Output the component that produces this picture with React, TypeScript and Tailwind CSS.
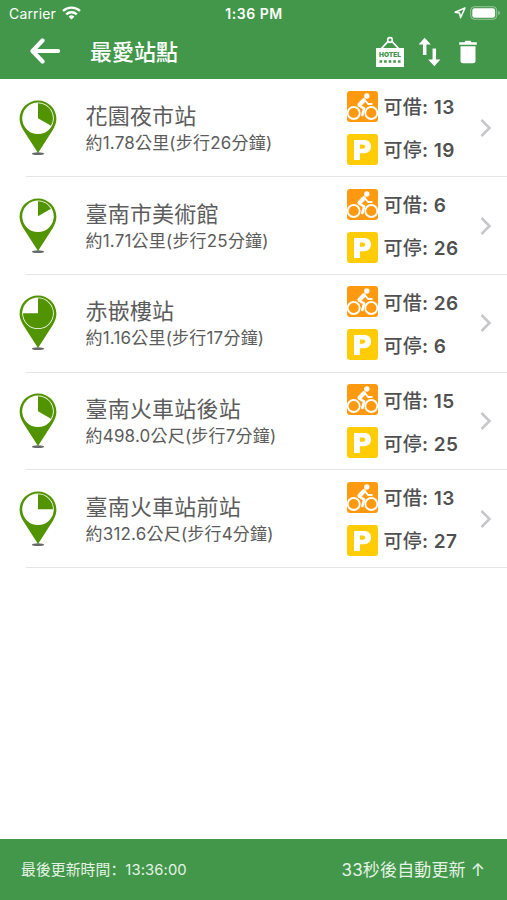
import React from 'react';

interface Station {
  name: string;
  distance: string;
  bikes: number;
  docks: number;
  angle: number;
}

const STATIONS: Station[] = [
  { name: '花園夜市站', distance: '約1.78公里(步行26分鐘)', bikes: 13, docks: 19, angle: 120 },
  { name: '臺南市美術館', distance: '約1.71公里(步行25分鐘)', bikes: 6, docks: 26, angle: 60 },
  { name: '赤嵌樓站', distance: '約1.16公里(步行17分鐘)', bikes: 26, docks: 6, angle: 270 },
  { name: '臺南火車站後站', distance: '約498.0公尺(步行7分鐘)', bikes: 15, docks: 25, angle: 120 },
  { name: '臺南火車站前站', distance: '約312.6公尺(步行4分鐘)', bikes: 13, docks: 27, angle: 90 },
];

const StationPin: React.FC<{ angle: number }> = ({ angle }) => {
  const r = 15;
  const rad = (angle * Math.PI) / 180;
  const x = 19 + r * Math.sin(rad);
  const y = 18.3 - r * Math.cos(rad);

  return (
    <svg width="38" height="56" viewBox="0 0 38 56" className="block shrink-0">
      <ellipse cx="19" cy="53.7" rx="6.2" ry="1.4" fill="#66686a" />
      <path d="M19 .4C8.8.4.6 8.6.6 18.8c0 4 1.5 7.5 3.6 11.1L19 53l14.8-23.1c2.1-3.6 3.6-7.1 3.6-11.1C37.4 8.6 29.2.4 19 .4Z" fill="#529300" />
      <circle cx="19" cy="18.3" r="15.8" fill="#fff" />
      <path d={`M19 18.3V${18.3 - r}A${r} ${r} 0 ${angle > 180 ? 1 : 0} 1 ${x} ${y}Z`} fill="#529300" />
    </svg>
  );
};

const BikeIcon = () => (
  <svg width="31" height="31" viewBox="0 0 31 31" className="block shrink-0">
    <rect width="31" height="31" rx="3" fill="#ff9a10" />
    <g fill="none" stroke="#fff" strokeLinecap="round" strokeLinejoin="round">
      <circle cx="6.7" cy="22" r="6" strokeWidth="1.8" />
      <circle cx="24.3" cy="22" r="6" strokeWidth="1.8" />
      <path d="m16.8 9.3-4.3 4.5" strokeWidth="4.2" />
      <path d="m12.3 14.5 4.9 3.2-1.9 6.3" strokeWidth="2.6" />
      <path d="m17.8 9 3.2 4h3.8" strokeWidth="1.9" />
    </g>
    <circle cx="19.8" cy="5" r="2.7" fill="#fff" />
  </svg>
);

const ParkingIcon = () => (
  <svg width="31" height="31" viewBox="0 0 31 31" className="block shrink-0">
    <rect width="31" height="31" rx="3" fill="#ffcc05" />
    <path fillRule="evenodd" d="M7 6h10c4.7 0 7 2.5 7 6.6s-2.5 6.6-7 6.6h-4.1V26H7Zm5.9 4.5v4.2h3c1.5 0 2.4-.7 2.4-2.1s-.9-2.1-2.4-2.1Z" fill="#fff" />
  </svg>
);

const StatusBar = () => (
  <div className="grid h-7 grid-cols-3 items-center px-2 text-[14px] leading-7">
    <div className="flex items-center gap-1.5 pl-px">
      <span className="tracking-[0.15px]">Carrier</span>
      <svg width="19" height="14" viewBox="0 0 19 14" className="-mt-0.5">
        <g fill="none" stroke="#fff" strokeWidth="2.4">
          <path d="M1 5a12.3 12.3 0 0 1 17 0" />
          <path d="M4.2 8.3a7.8 7.8 0 0 1 10.6 0" />
        </g>
        <path d="M9.5 13.6 6.6 10.7a4.1 4.1 0 0 1 5.8 0Z" fill="#fff" />
      </svg>
    </div>
    <span className="pl-px text-center font-semibold tracking-[0.55px]">1:36 PM</span>
    <div className="flex items-center justify-end gap-1 pb-0.5">
      <svg width="12" height="12" viewBox="0 0 12 12">
        <path d="M11 1 1.1 5.2l4.5.9.9 4.6Z" fill="none" stroke="#fff" strokeWidth="1.5" strokeLinejoin="round" />
      </svg>
      <svg width="31" height="14" viewBox="0 0 31 14" className="-mr-0.5">
        <rect x=".7" y=".7" width="26" height="12.6" rx="3.6" fill="none" stroke="#fff" strokeOpacity=".45" />
        <rect x="2.3" y="2.2" width="22.8" height="9.6" rx="2.2" fill="#fff" />
        <path d="M28.3 4.8c2 .7 2 3.7 0 4.4Z" fill="#fff" fillOpacity=".5" />
      </svg>
    </div>
  </div>
);

const TitleBar = () => (
  <div className="flex h-[51px] items-center pb-[5px] pl-[30px] pr-[30px]">
    <svg width="30" height="26" viewBox="0 0 30 26" className="shrink-0">
      <path d="M12.5 2.5 2.5 13l10 10.5M3 13h25" fill="none" stroke="#fff" strokeWidth="4.2" strokeLinecap="round" strokeLinejoin="round" />
    </svg>
    <h1 className="ml-[30px] pt-0.5 text-[22px] font-medium">最愛站點</h1>
    <div className="ml-auto flex items-center gap-[13px] pt-0.5">
      <svg width="30" height="32" viewBox="0 0 30 32">
        <path d="m6 13 8-8.5h2l8 8.5" fill="none" stroke="#fff" strokeWidth="1.8" />
        <circle cx="15" cy="4" r="2.3" fill="#43974a" stroke="#fff" strokeWidth="1.7" />
        <rect x="1" y="12" width="28" height="19" fill="#fff" />
        <text x="15" y="21.3" textAnchor="middle" textLength="22" lengthAdjust="spacingAndGlyphs" fontSize="6.8" fontWeight="900" fill="#43974a">HOTEL</text>
        <path d="M4.5 25.5h21" stroke="#43974a" strokeWidth="2.5" strokeDasharray="2.6 2" />
      </svg>
      <svg width="23" height="32" viewBox="0 0 23 32">
        <g stroke="#fff" strokeWidth="3.5">
          <path d="M6.7 7v12M16.3 12.5V25" />
        </g>
        <path d="M6.7 1.8 12.8 8.5H.6ZM16.3 30.2l6.1-6.7H10.2Z" fill="#fff" />
      </svg>
      <svg width="18" height="24" viewBox="0 0 18 24" className="ml-[5px]">
        <path d="M.2 2.3h5.3l1-1.5h5l1 1.5h5.3v2.5H.2ZM1.5 6.2h15v14.5a2.5 2.5 0 0 1-2.5 2.5H4a2.5 2.5 0 0 1-2.5-2.5Z" fill="#fff" />
      </svg>
    </div>
  </div>
);

const StationRow: React.FC<{ station: Station }> = ({ station }) => (
  <li className="h-[97.7px] pl-[26px]">
    <div className="flex h-full items-center border-b border-[#e5e5e5]">
      <div className="-ml-[7px] w-[66.5px] shrink-0">
        <StationPin angle={station.angle} />
      </div>
      <div className="w-[261px] shrink-0 whitespace-nowrap pt-1 text-[#5c5c5c]">
        <div className="text-[22px] leading-[27px] tracking-[0.2px]">{station.name}</div>
        <div className="text-[17px] leading-[27px] tracking-[0.2px]">{station.distance}</div>
      </div>
      <div className="flex w-[133px] shrink-0 flex-col gap-3 text-[19px] font-semibold leading-[31px] tracking-[0.45px] text-[#505050]">
        <div className="flex h-[31px] items-center gap-1.5">
          <BikeIcon />
          <span className="whitespace-nowrap pt-[3px]"><span className="font-medium tracking-[0.25px]">可借</span>: {station.bikes}</span>
        </div>
        <div className="flex h-[31px] items-center gap-1.5">
          <ParkingIcon />
          <span className="whitespace-nowrap pt-[3px]"><span className="font-medium tracking-[0.25px]">可停</span>: {station.docks}</span>
        </div>
      </div>
      <svg width="12" height="20" viewBox="0 0 12 20" className="shrink-0">
        <path d="m1.5 2 8 8-8 8" fill="none" stroke="#c7c7cb" strokeWidth="2.5" />
      </svg>
    </div>
  </li>
);

export default function App() {
  return (
    <div className="flex h-[900px] w-[507px] flex-col overflow-hidden bg-white font-['Inter','Noto_Sans_CJK_TC',sans-serif]">
      <header className="h-[79px] shrink-0 bg-[#43974a] text-white">
        <StatusBar />
        <TitleBar />
      </header>
      <ul className="flex-1 pt-[0.6px]">
        {STATIONS.map((s) => (
          <StationRow key={s.name} station={s} />
        ))}
      </ul>
      <footer className="flex h-[61px] shrink-0 items-center justify-between bg-[#43974a] pl-[21px] pr-[22px] text-[#e4f3e5]">
        <span className="text-[14.8px] tracking-[0.1px]">
          最後更新時間<span className="font-['Noto_Sans_CJK_SC',sans-serif]" lang="zh-CN">：</span>13:36:00
        </span>
        <span className="pt-0.5 text-[17px] tracking-[0.15px]">33秒後自動更新 ↑</span>
      </footer>
    </div>
  );
}
